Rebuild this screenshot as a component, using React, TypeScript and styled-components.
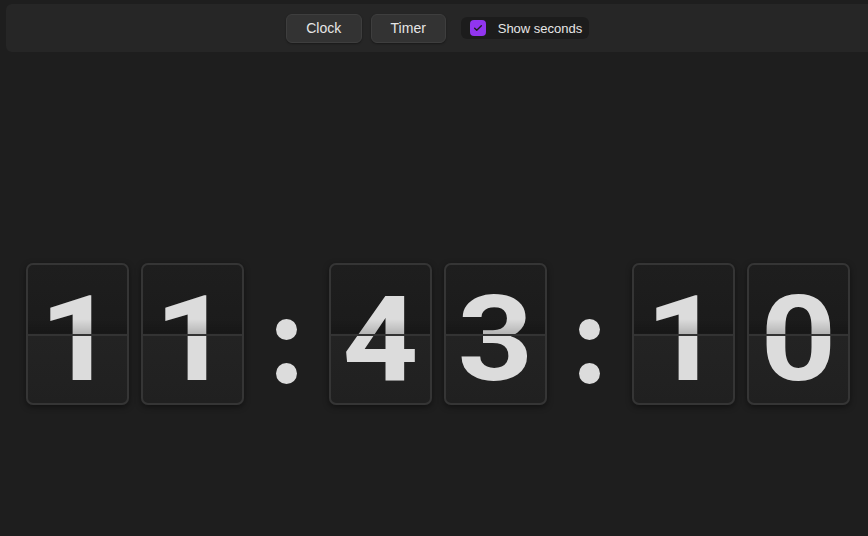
import React from "react";
import styled, { createGlobalStyle } from "styled-components";

const GlobalStyle = createGlobalStyle`
  html, body {
    margin: 0;
    padding: 0;
    background: #1e1e1e;
    overflow: hidden;
  }
  body {
    font-family: "Liberation Sans", Arial, sans-serif;
  }
`;

const Page = styled.div`
  width: 863px;
  margin-left: 6px;
  padding-top: 4px;
  height: 532px;
`;

const Toolbar = styled.div`
  height: 48px;
  background: #262626;
  border-radius: 6px 0 0 6px;
  display: flex;
  align-items: center;
  justify-content: center;
  gap: 9px;
`;

const ModeButton = styled.button<{ $w: number }>`
  width: ${(p) => p.$w}px;
  height: 29px;
  padding: 0;
  background: #333333;
  border: 1px solid #3e3e3e;
  border-radius: 6px;
  color: #e6e6e6;
  font-family: "Liberation Sans", Arial, sans-serif;
  font-size: 14px;
  box-shadow: 0 1px 2px rgba(0, 0, 0, 0.35);
`;

const Toggle = styled.label`
  margin-left: 6px;
  height: 22px;
  padding: 0 7px 0 9px;
  background: #1c1c1c;
  border-radius: 6px;
  display: flex;
  align-items: center;
  gap: 12px;
  color: #e6e6e6;
  font-size: 13px;
`;

const CheckBox = styled.span`
  width: 16px;
  height: 16px;
  border-radius: 4px;
  background: #9135ef;
  display: flex;
  align-items: center;
  justify-content: center;
`;

const ClockRow = styled.div`
  margin-top: 211px;
  display: flex;
  justify-content: center;
  align-items: center;
`;

const Pair = styled.div`
  display: flex;
  gap: 12px;
`;

const Card = styled.div`
  position: relative;
  width: 103px;
  height: 142px;
  box-sizing: border-box;
  border: 2px solid #353535;
  border-radius: 7px;
  background: linear-gradient(
    to bottom,
    #1e1e1e 0%,
    #1b1b1b 49%,
    #232323 51%,
    #202020 100%
  );
  box-shadow: 0 2px 6px rgba(0, 0, 0, 0.45);

  &::after {
    content: "";
    position: absolute;
    left: 0;
    right: 0;
    top: 69px;
    height: 2px;
    background: #333333;
  }
`;

const Digit = styled.span`
  display: block;
  text-align: center;
  font-family: Roboto, "Liberation Sans", Arial, sans-serif;
  font-weight: 700;
  font-size: 118px;
  line-height: 116px;
  padding-top: 17px;
  color: #dcdcdc;
  transform: scaleX(1.12);
`;

const Shade = styled.div`
  position: absolute;
  left: 0;
  right: 0;
  top: 54px;
  height: 15px;
  background: linear-gradient(to bottom, rgba(0, 0, 0, 0), rgba(0, 0, 0, 0.18));
  pointer-events: none;
`;

const Colon = styled.div`
  margin: 0 32px;
  width: 21px;
  display: flex;
  flex-direction: column;
  gap: 23px;
  padding-top: 34px;
`;

const Dot = styled.span`
  width: 21px;
  height: 21px;
  border-radius: 50%;
  background: #dcdcdc;
`;

const FlipCard = ({ value }: { value: string }) => (
  <Card>
    <Digit>{value}</Digit>
    <Shade />
  </Card>
);

const Check = () => (
  <svg width="10" height="10" viewBox="0 0 24 24" fill="none">
    <path
      d="M4 12.5l5 5L20 6.5"
      stroke="#1e1e1e"
      strokeWidth="3.4"
      strokeLinecap="round"
      strokeLinejoin="round"
    />
  </svg>
);

export default function App() {
  const time = ["11", "43", "10"];
  return (
    <>
      <GlobalStyle />
      <Page>
        <Toolbar>
          <ModeButton $w={76}>Clock</ModeButton>
          <ModeButton $w={75}>Timer</ModeButton>
          <Toggle>
            <CheckBox>
              <Check />
            </CheckBox>
            Show seconds
          </Toggle>
        </Toolbar>
        <ClockRow>
          {time.map((pair, i) => (
            <React.Fragment key={i}>
              {i > 0 && (
                <Colon>
                  <Dot />
                  <Dot />
                </Colon>
              )}
              <Pair>
                <FlipCard value={pair[0]} />
                <FlipCard value={pair[1]} />
              </Pair>
            </React.Fragment>
          ))}
        </ClockRow>
      </Page>
    </>
  );
}
